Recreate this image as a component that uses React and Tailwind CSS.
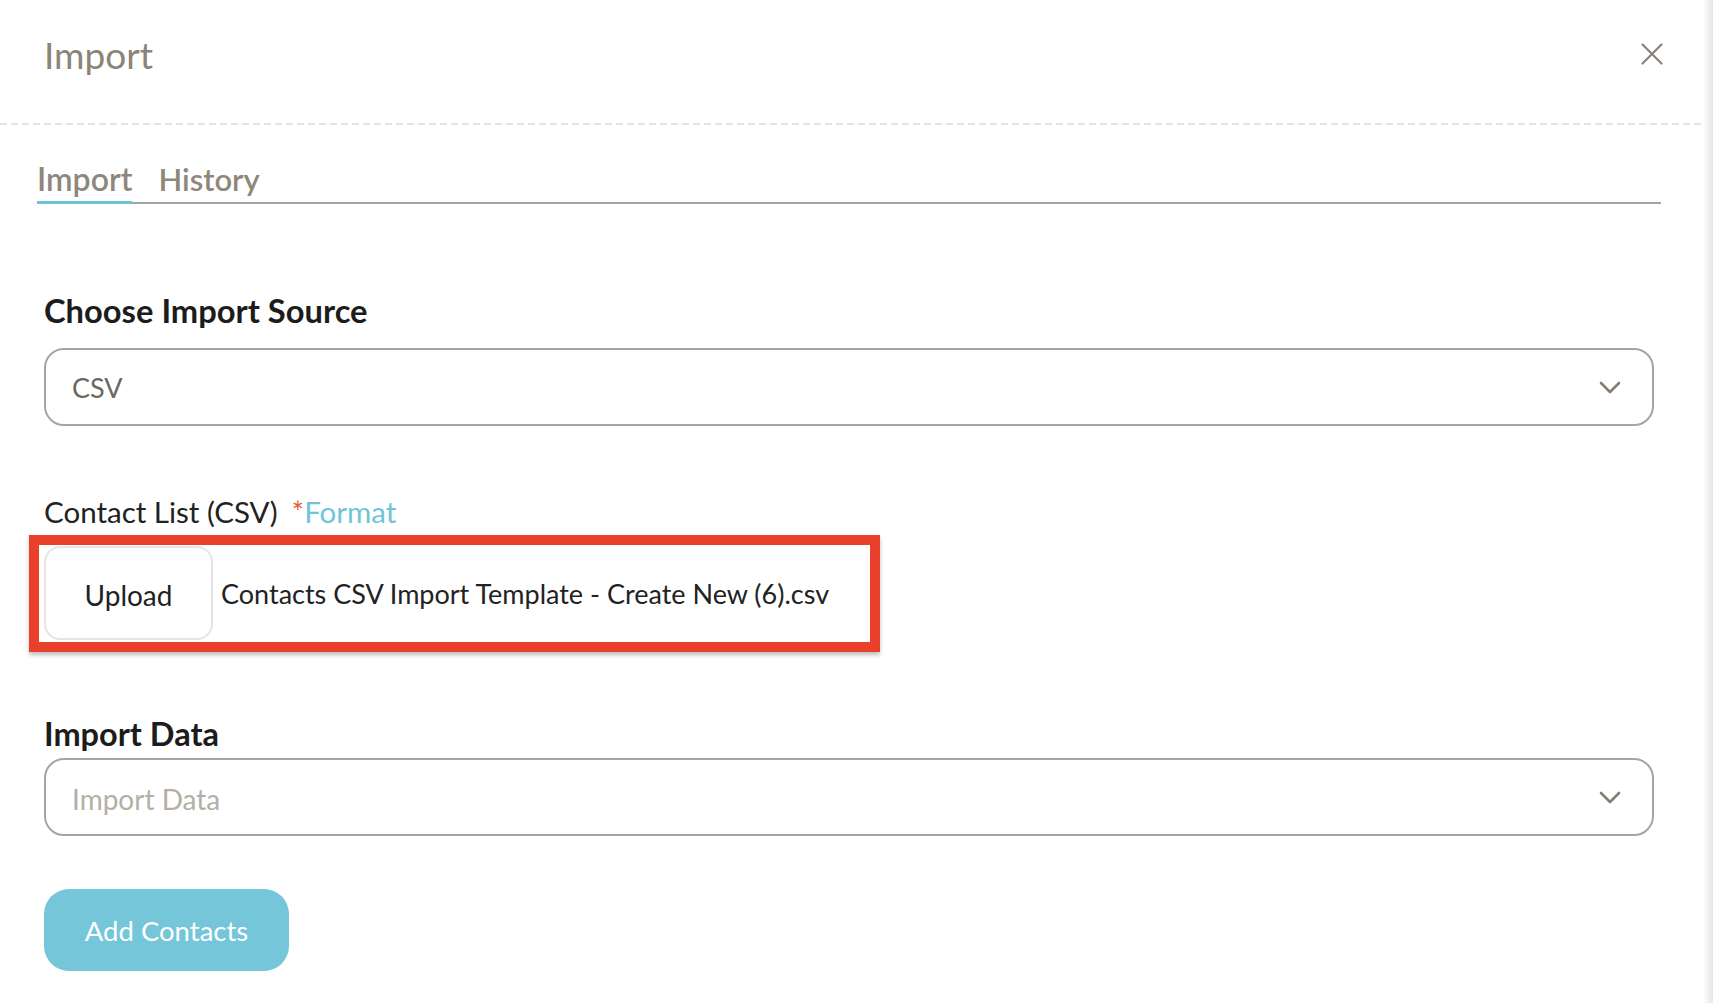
import React from "react";

function Chevron() {
  return (
    <svg width="22" height="13" viewBox="0 0 22 13" fill="none">
      <path d="M2 2 L11 11 L20 2" stroke="#857d70" strokeWidth="2.6" strokeLinecap="round" strokeLinejoin="round" />
    </svg>
  );
}

function Select({ children }) {
  return (
    <div className="h-[78px] w-full rounded-[20px] border-2 border-[#a5a5a5] flex items-center justify-between pl-[26px] pr-[31px]">
      <div className="pt-[3px]">{children}</div>
      <Chevron />
    </div>
  );
}

export default function App() {
  return (
    <div className="flex h-[1003px] w-full bg-white overflow-hidden font-['Lato','Noto_Sans',sans-serif]">
      <div className="flex-1 flex flex-col">
        <header className="h-[123px] pb-[15px] flex items-center justify-between pl-[44px] pr-[40px]">
          <h1 className="text-[37px] leading-none text-[#8b8477]">Import</h1>
          <svg width="22" height="22" viewBox="0 0 22 22" fill="none">
            <path d="M1.5 1.5 L20.5 20.5 M20.5 1.5 L1.5 20.5" stroke="#8a8478" strokeWidth="2.2" strokeLinecap="round" />
          </svg>
        </header>
        <div className="h-[2px] w-full bg-[repeating-linear-gradient(to_right,#e7e4dd_0_7px,transparent_7px_11px)]" />

        <div className="ml-[37px] mr-[42px] mt-[36px] flex items-end gap-[26px] border-b-2 border-[#a3a3a3]">
          <div className="text-[32px] leading-[36px] font-semibold text-[#8f877b] pb-[4px] border-b-[3px] border-[#6dc3d6] -mb-[2px]">
            Import
          </div>
          <div className="text-[31px] leading-[36px] font-semibold text-[#8f877b] pb-[5px]">
            History
          </div>
        </div>

        <div className="flex flex-col items-start pl-[44px] pr-[49px]">
          <div className="mt-[87px] mb-[17px] text-[32.7px] leading-[40px] font-bold text-[#1c1c1c]">
            Choose Import Source
          </div>
          <Select>
            <span className="text-[27px] text-[#6b6862]">CSV</span>
          </Select>

          <div className="mt-[68px] text-[29.5px] leading-[36px] text-[#222]">
            Contact List (CSV)
            <span className="ml-[14px] text-[#e8593c]">*</span>
            <span className="text-[#6ec5d8]">Format</span>
          </div>

          <div className="relative mt-[16px] flex items-center gap-[8px]">
            <button className="w-[169px] h-[94px] pt-[3px] rounded-[16px] border-2 border-[#e5e5e5] bg-white text-[28px] text-[#222]">
              Upload
            </button>
            <span className="pt-[3px] text-[27px] text-[#222]">Contacts CSV Import Template - Create New (6).csv</span>
            <div className="absolute left-[-15px] top-[-11px] w-[851px] h-[117px] border-[10px] border-[#e8402a] shadow-[0_3px_4px_rgba(0,0,0,0.25)] pointer-events-none" />
          </div>

          <div className="mt-[74px] mb-[4px] text-[32.5px] leading-[40px] font-bold text-[#1c1c1c]">
            Import Data
          </div>
          <Select>
            <span className="text-[28px] text-[#b4afa6]">Import Data</span>
          </Select>

          <button className="mt-[53px] w-[245px] h-[82px] pt-[2px] rounded-[25px] bg-[#75c6d8] text-white text-[27.5px]">
            Add Contacts
          </button>
        </div>
      </div>
      <div className="w-[10px] h-full bg-linear-to-r from-white to-[#e6e6e6]" />
    </div>
  );
}
